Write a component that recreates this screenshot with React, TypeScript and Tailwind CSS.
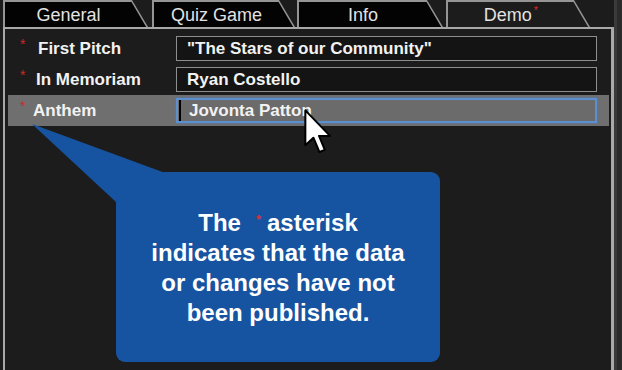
import React from "react";

type Tab = { label: string; width: string; ml: string; active?: boolean; dirty?: boolean };

const tabs: Tab[] = [
  { label: "General", width: "w-[145px]", ml: "ml-[3px]" },
  { label: "Quiz Game", width: "w-[143px]", ml: "ml-[4px]" },
  { label: "Info", width: "w-[146px]", ml: "ml-[2px]" },
  { label: "Demo", width: "w-[144px]", ml: "ml-[3px]", active: true, dirty: true },
];

type Row = { label: string; value: string; starW: string; labelW: string; selected?: boolean };

const rows: Row[] = [
  { label: "First Pitch", value: "\"The Stars of our Community\"", starW: "w-[18px]", labelW: "w-[138px]" },
  { label: "In Memoriam", value: "Ryan Costello", starW: "w-[16px]", labelW: "w-[140px]" },
  { label: "Anthem", value: "Jovonta Patton", starW: "w-[13px]", labelW: "w-[143px]", selected: true },
];

const TabShape = ({ tab }: { tab: Tab }) => (
  <div
    className={`relative h-[27px] shrink-0 bg-[#959595] ${tab.width} ${tab.ml} [clip-path:polygon(0_0,calc(100%-16px)_0,100%_100%,0_100%)]`}
  >
    <div
      className={`absolute inset-0 left-[2px] top-[2px] flex items-center justify-center pr-[16px] ${
        tab.active ? "bg-[#1c1c1c]" : "bg-[#030303]"
      } [clip-path:polygon(0_0,calc(100%-16.5px)_0,calc(100%-1.8px)_100%,0_100%)]`}
    >
      <span className="text-[18px] leading-none text-[#e2e2e2]">{tab.label}</span>
      {tab.dirty && <span className="self-start mt-[3px] ml-[2px] text-[11px] leading-none text-[#d8262a]">*</span>}
    </div>
  </div>
);

const Cursor = () => (
  <svg className="absolute left-[304px] top-[109px]" width="28" height="46" viewBox="0 0 12.5 20.5">
    <path
      d="M0.6 0.6 L0.6 16.2 L4.2 12.8 L6.9 19.2 L9.3 18.2 L6.7 12 L11.6 12 Z"
      fill="#ffffff"
      stroke="#000000"
      strokeWidth="0.9"
      strokeLinejoin="round"
    />
  </svg>
);

export default function App() {
  return (
    <div className="relative flex h-[370px] w-[622px] overflow-hidden bg-[#1c1c1c] font-['Liberation_Sans',Arial,sans-serif]">
      <div className="flex w-[614px] flex-col">
        <div className="flex h-[27px] items-end">
          {tabs.map((t) => (
            <TabShape key={t.label} tab={t} />
          ))}
        </div>
        <div className="ml-[3px] flex-1 border-l-2 border-r-[3px] border-t-2 border-[#a9a9a9] pt-[4px]">
          {rows.map((r) => (
            <div
              key={r.label}
              className={`ml-[3px] mr-[2px] flex h-[31px] items-center pl-[12px] ${r.selected ? "bg-[#6f6f6f]" : ""}`}
            >
              <span className={`${r.starW} self-start pt-[4px] text-[14px] leading-none text-[#cc2a2a]`}>*</span>
              <span className={`${r.labelW} text-[17px] font-bold text-[#f2f2f2]`}>{r.label}</span>
              <div
                className={`flex h-[25px] w-[421px] items-center overflow-hidden ${
                  r.selected
                    ? "border-2 border-[#5b8fd0] bg-[#6b6b6b] shadow-[0_0_2px_#4a7fc0]"
                    : "border-[1.5px] border-[#8e8e8e] bg-[#141414]"
                }`}
              >
                {r.selected && <span className="ml-[1px] h-[21px] w-[2px] bg-black" />}
                <span
                  className={`whitespace-nowrap text-[17px] font-bold text-[#f2f2f2] ${r.selected ? "ml-[8px]" : "ml-[10px]"}`}
                >
                  {r.value}
                </span>
              </div>
            </div>
          ))}
        </div>
      </div>
      <div className="flex-1 border-l-[3px] border-[#3a3a3a] bg-[#2a2a2a]" />

      <svg className="pointer-events-none absolute left-0 top-0" width="622" height="370">
        <polygon points="32,124 168,174 116,202" fill="#1654a1" />
      </svg>
      <div className="absolute left-[116px] top-[172px] flex h-[190px] w-[324px] items-center justify-center rounded-[9px] bg-[#1654a1] pb-[2px] text-center text-[24px] font-bold leading-[30px] text-white">
        <p>
          The<span className="ml-[15px] mr-[6px] align-[7px] text-[13px] text-[#d8323a]">*</span>asterisk
          <br />
          indicates that the data
          <br />
          or changes have not
          <br />
          been published.
        </p>
      </div>
      <Cursor />
    </div>
  );
}
